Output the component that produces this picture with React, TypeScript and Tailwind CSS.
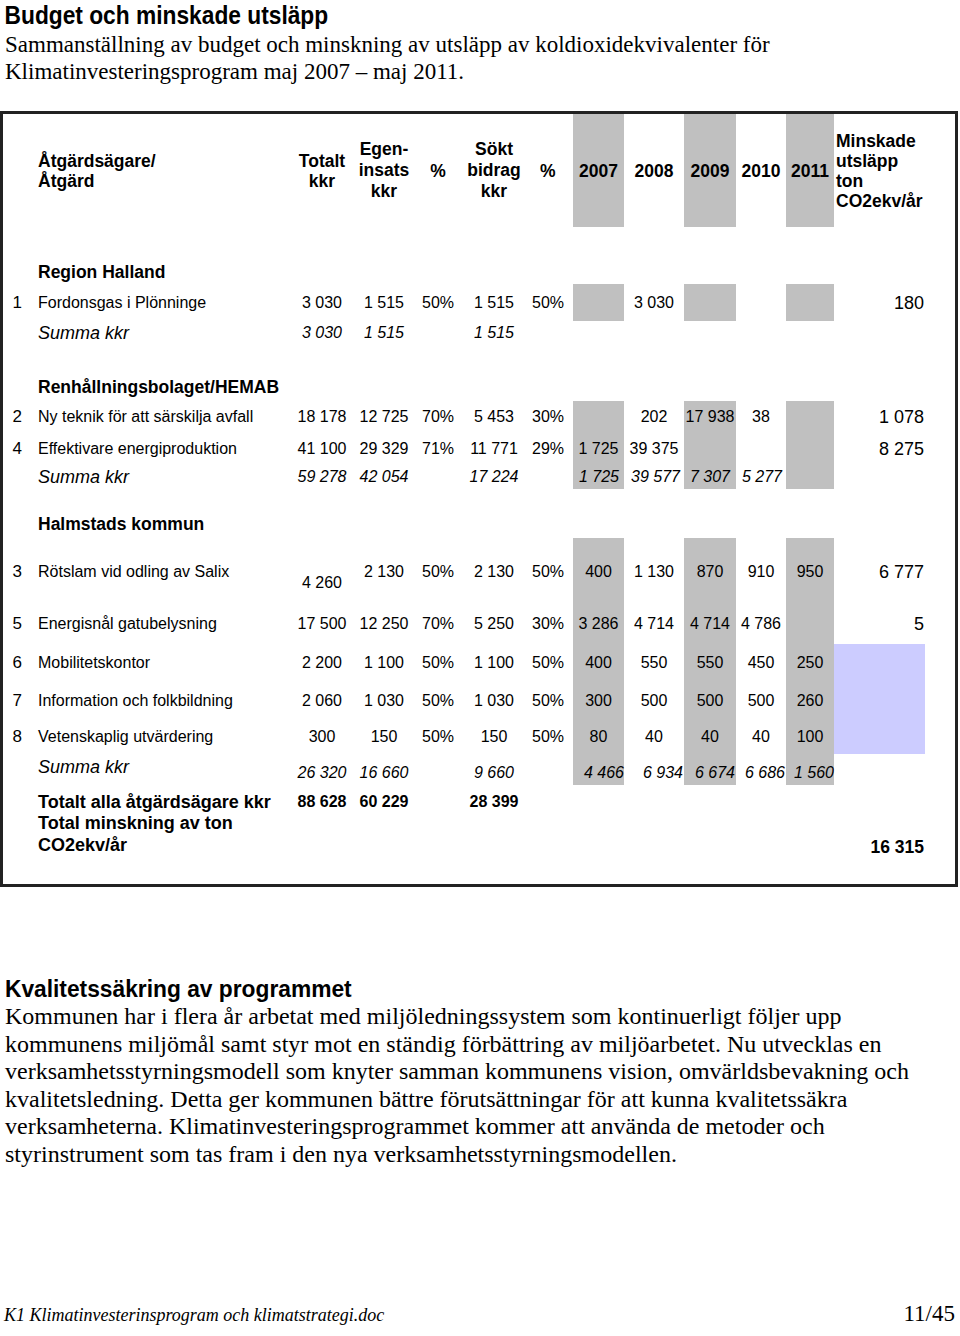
import type { ReactNode } from "react";

const GRID =
  "grid grid-cols-[27px_266px_52px_72px_36px_76px_41px_51px_60px_52px_50px_48px_91px_30px]";

// default alignment per column
const BASE = [
  "text-right pr-[8px]",
  "text-left pl-[8px]",
  "text-center",
  "text-center",
  "text-center",
  "text-center",
  "text-left",
  "text-center",
  "text-center",
  "text-center",
  "text-center",
  "text-center",
  "text-right pr-[1px]",
  "",
];
const GRAY_COLS = [7, 9, 11];

interface RowProps {
  h: string;
  cells: ReactNode[];
  gray?: boolean;
  lav?: boolean;
  cls?: string;
  valign?: string;
  v?: Record<number, string>;
  a?: Record<number, string>;
}

const Row = ({ h, cells, gray, lav, cls = "", valign = "justify-center", v = {}, a = {} }: RowProps) => (
  <div className={`${GRID} ${h} ${cls}`}>
    {BASE.map((b, i) => {
      const bg =
        gray && GRAY_COLS.includes(i) ? "bg-[#c0c0c0]" : lav && i === 12 ? "bg-[#ccccff]" : "";
      return (
        <div key={i} className={`flex flex-col whitespace-nowrap ${v[i] ?? valign} ${a[i] ?? b} ${bg}`}>
          {cells[i] ?? null}
        </div>
      );
    })}
  </div>
);

const num = "text-right pr-[8px] text-[17px]";
const big = "text-right pr-[1px] text-[18px]";
const sumLabel = "text-left pl-[8px] text-[18px]";

export default function App() {
  return (
    <div className="w-[960px] min-h-[1336px] bg-white text-black">
      <h1 className="h-[31px] pl-[5px] font-['Liberation_Sans',Arial,sans-serif] text-[25px] leading-[31px] font-bold origin-left scale-x-[0.91] whitespace-nowrap">
        Budget och minskade utsläpp
      </h1>
      <p className="pl-[5px] font-['Liberation_Serif','Times_New_Roman',serif] text-[23px] leading-[27px] whitespace-nowrap">
        <span className="block">Sammanställning av budget och minskning av utsläpp av koldioxidekvivalenter för</span>
        <span className="block">Klimatinvesteringsprogram maj 2007 – maj 2011.</span>
      </p>

      <div className="mt-[26px] w-[958px] border-[3px] border-[#222] font-['Liberation_Sans',Arial,sans-serif] text-[16px] leading-[24px]">
        <Row
          h="h-[113px]"
          gray
          cls="font-bold text-[17.5px] leading-[20px]"
          a={{ 6: "text-left pl-[8px]", 12: "text-left pl-[2px]" }}
          cells={[
            null,
            <>Åtgärdsägare/<br />Åtgärd</>,
            <>Totalt<br />kkr</>,
            <span className="leading-[21px]">Egen-<br />insats<br />kkr</span>,
            "%",
            <span className="leading-[21px]">Sökt<br />bidrag<br />kkr</span>,
            "%",
            "2007",
            "2008",
            "2009",
            "2010",
            "2011",
            <>Minskade<br />utsläpp<br />ton<br />CO2ekv/år</>,
          ]}
        />
        <div className="h-[33px]" />
        <Row h="h-[24px]" cls="font-bold text-[17.5px]" cells={[null, "Region Halland"]} />
        <Row
          h="h-[37px]"
          gray
          a={{ 0: num, 12: big }}
          cells={["1", "Fordonsgas i Plönninge", "3 030", "1 515", "50%", "1 515", "50%", "", "3 030", "", "", "", "180"]}
        />
        <Row
          h="h-[24px]"
          cls="italic"
          a={{ 1: sumLabel }}
          cells={[null, "Summa kkr", "3 030", "1 515", "", "1 515"]}
        />
        <div className="h-[27px]" />
        <Row h="h-[29px]" cls="font-bold text-[17.5px]" cells={[null, "Renhållningsbolaget/HEMAB"]} />
        <Row
          h="h-[32px]"
          gray
          a={{ 0: num, 12: big }}
          cells={["2", "Ny teknik för att särskilja avfall", "18 178", "12 725", "70%", "5 453", "30%", "", "202", "17 938", "38", "", "1 078"]}
        />
        <Row
          h="h-[32px]"
          gray
          a={{ 0: num, 12: big }}
          cells={["4", "Effektivare energiproduktion", "41 100", "29 329", "71%", "11 771", "29%", "1 725", "39 375", "", "", "", "8 275"]}
        />
        <Row
          h="h-[23px]"
          gray
          cls="italic"
          a={{
            1: sumLabel,
            7: "text-right pr-[5px]",
            8: "text-right pr-[4px]",
            9: "text-right pr-[6px]",
            10: "text-right pr-[4px]",
          }}
          cells={[null, "Summa kkr", "59 278", "42 054", "", "17 224", "", "1 725", "39 577", "7 307", "5 277", ""]}
        />
        <div className="h-[22px]" />
        <Row h="h-[28px]" cls="font-bold text-[17.5px]" cells={[null, "Halmstads kommun"]} />
        <Row
          h="h-[65px]"
          gray
          valign="justify-start pt-[22px]"
          v={{ 2: "justify-start pt-[33px]" }}
          a={{ 0: num, 12: big }}
          cells={["3", "Rötslam vid odling av Salix", "4 260", "2 130", "50%", "2 130", "50%", "400", "1 130", "870", "910", "950", "6 777"]}
        />
        <Row
          h="h-[41px]"
          gray
          a={{ 0: num, 12: big }}
          cells={["5", "Energisnål gatubelysning", "17 500", "12 250", "70%", "5 250", "30%", "3 286", "4 714", "4 714", "4 786", "", "5"]}
        />
        <Row
          h="h-[38px]"
          gray
          lav
          a={{ 0: num }}
          cells={["6", "Mobilitetskontor", "2 200", "1 100", "50%", "1 100", "50%", "400", "550", "550", "450", "250", ""]}
        />
        <Row
          h="h-[37px]"
          gray
          lav
          a={{ 0: num }}
          cells={["7", "Information och folkbildning", "2 060", "1 030", "50%", "1 030", "50%", "300", "500", "500", "500", "260", ""]}
        />
        <Row
          h="h-[35px]"
          gray
          lav
          a={{ 0: num }}
          cells={["8", "Vetenskaplig utvärdering", "300", "150", "50%", "150", "50%", "80", "40", "40", "40", "100", ""]}
        />
        <Row
          h="h-[28px]"
          gray
          cls="italic"
          valign="justify-start pt-[7px]"
          v={{ 1: "justify-start pt-[1px]" }}
          a={{
            1: sumLabel,
            7: "text-right pr-0",
            8: "text-right pr-[1px]",
            9: "text-right pr-[1px]",
            10: "text-right pr-[1px]",
            11: "text-right pr-0",
          }}
          cells={[null, "Summa kkr", "26 320", "16 660", "", "9 660", "", "4 466", "6 934", "6 674", "6 686", "1 560"]}
        />
        <Row
          h="h-[30px]"
          cls="font-bold"
          valign="justify-start pt-[8px]"
          a={{ 1: "text-left pl-[8px] text-[18px]" }}
          cells={[null, "Totalt alla åtgärdsägare kkr", "88 628", "60 229", "", "28 399"]}
        />
        <Row
          h="h-[72px]"
          cls="font-bold leading-[22px]"
          valign="justify-start"
          v={{ 12: "justify-start pt-[24px]" }}
          a={{ 1: "text-left pl-[8px] text-[18px]", 12: "text-right pr-[1px] text-[17.5px]" }}
          cells={[
            null,
            <>Total minskning av ton<br />CO2ekv/år</>,
            "",
            "",
            "",
            "",
            "",
            "",
            "",
            "",
            "",
            "",
            "16 315",
          ]}
        />
      </div>

      <h2 className="mt-[88px] pl-[5px] font-['Liberation_Sans',Arial,sans-serif] text-[23px] leading-[28px] font-bold origin-left scale-x-[0.99] whitespace-nowrap">
        Kvalitetssäkring av programmet
      </h2>
      <p className="pl-[5px] font-['Liberation_Serif','Times_New_Roman',serif] text-[24px] leading-[27.5px] whitespace-nowrap">
        <span className="block">Kommunen har i flera år arbetat med miljöledningssystem som kontinuerligt följer upp</span>
        <span className="block">kommunens miljömål samt styr mot en ständig förbättring av miljöarbetet. Nu utvecklas en</span>
        <span className="block">verksamhetsstyrningsmodell som knyter samman kommunens vision, omvärldsbevakning och</span>
        <span className="block">kvalitetsledning. Detta ger kommunen bättre förutsättningar för att kunna kvalitetssäkra</span>
        <span className="block">verksamheterna. Klimatinvesteringsprogrammet kommer att använda de metoder och</span>
        <span className="block">styrinstrument som tas fram i den nya verksamhetsstyrningsmodellen.</span>
      </p>

      <div className="mt-[132px] flex items-baseline justify-between pl-[4px] pr-[5px] font-['Liberation_Serif','Times_New_Roman',serif] leading-[28px]">
        <span className="text-[18px] italic">K1 Klimatinvesterinsprogram och klimatstrategi.doc</span>
        <span className="text-[23px]">11/45</span>
      </div>
    </div>
  );
}
